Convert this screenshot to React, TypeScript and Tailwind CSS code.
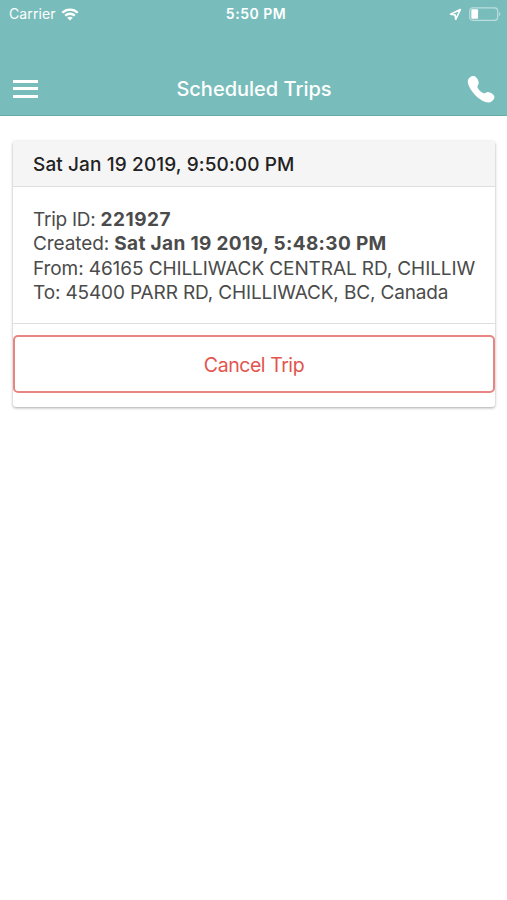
type Trip = {
  id: string;
  scheduled: string;
  created: string;
  from: string;
  to: string;
};

const trips: Trip[] = [
  {
    id: "221927",
    scheduled: "Sat Jan 19 2019, 9:50:00 PM",
    created: "Sat Jan 19 2019, 5:48:30 PM",
    from: "46165 CHILLIWACK CENTRAL RD, CHILLIW",
    to: "45400 PARR RD, CHILLIWACK, BC, Canada",
  },
];

function StatusBar() {
  return (
    <div className="grid h-7 grid-cols-3 items-center pl-[9px] pr-1.5">
      <div className="flex items-center gap-[5px]">
        <span className="text-[14px] leading-5 tracking-[0.1px]">Carrier</span>
        <svg width="18" height="13" viewBox="0 0 18 13" fill="none" aria-hidden>
          <path d="M1.3 4.7C5.6.5 12.4.5 16.7 4.7" stroke="currentColor" strokeWidth="2.3" />
          <path d="M4.2 7.6c2.7-2.5 6.9-2.5 9.6 0" stroke="currentColor" strokeWidth="2.3" />
          <path d="M9 12.6 6.2 9.8c1.6-1.5 4-1.5 5.6 0L9 12.6Z" fill="currentColor" />
        </svg>
      </div>
      <span className="pl-0.5 text-center text-[14px] font-semibold leading-5 tracking-[0.5px]">5:50 PM</span>
      <div className="flex items-center justify-end gap-[7px]">
        <svg width="13" height="13" viewBox="0 0 13 13" fill="none" aria-hidden>
          <path
            d="M1.5 6.2 11.4 1.5 6.7 11.4 6.1 6.9 1.5 6.2Z"
            stroke="currentColor"
            strokeWidth="1.6"
            strokeLinejoin="round"
          />
        </svg>
        <svg width="32" height="15" viewBox="0 0 32 15" fill="none" aria-hidden>
          <rect x=".7" y=".8" width="28" height="12.5" rx="3" stroke="currentColor" strokeOpacity=".5" strokeWidth="1.2" />
          <rect x="2.3" y="2.3" width="6.8" height="9.4" rx="1" fill="currentColor" />
          <path d="M30 5.2c1.8.7 1.8 3.2 0 3.9V5.2Z" fill="currentColor" fillOpacity=".5" />
        </svg>
      </div>
    </div>
  );
}

function Header() {
  return (
    <header className="flex h-[116px] flex-col justify-between border-b border-[#69a9a8] bg-[#78bdbc] text-white">
      <StatusBar />
      <div className="grid h-[53px] grid-cols-[60px_1fr_60px] items-center">
        <button aria-label="Menu" className="flex flex-col gap-[4.5px] pl-[13px]">
          <span className="h-[3px] w-[25px] bg-white" />
          <span className="h-[3px] w-[25px] bg-white" />
          <span className="h-[3px] w-[25px] bg-white" />
        </button>
        <h1 className="pl-px text-center text-[20px] font-medium leading-7">Scheduled Trips</h1>
        <button aria-label="Call" className="flex justify-end pr-3">
          <svg width="28" height="28" viewBox="0 0 28 28" fill="currentColor" aria-hidden>
            <path d="M1 5C1.8 2 5.2.2 7.7 1.2c2.2 1 4.2 4.8 4 7-.2 1.8-1.6 2.5-1.3 3.9.5 2 3.9 5.6 6.2 6.2 1.5.3 2.5-1.3 4.3-1.3 2.2.1 5.4 2.1 6.3 3.9 1 2.5-1.7 5.7-4.4 6.4-3.9 1-9.9-2.5-14.2-6.8C4.5 16.3-.2 9.5 1 5Z" />
          </svg>
        </button>
      </div>
    </header>
  );
}

function TripCard({ trip }: { trip: Trip }) {
  return (
    <article className="h-[266px] rounded-[3px] bg-white shadow-[0_1px_3px_rgba(0,0,0,0.35)]">
      <h2 className="h-[46px] rounded-t-[3px] border-b border-[#dedede] bg-[#f5f5f5] pl-5 text-[19px] font-[450] leading-[47px] tracking-[0.12px] text-[#222]">
        {trip.scheduled}
      </h2>
      <div className="h-[137px] overflow-hidden whitespace-nowrap border-b border-[#dedede] pl-5 pt-[21px] text-[19px] leading-[24.3px] tracking-[-0.1px] text-[#4b4b4b]">
        <p>
          <span className="tracking-[-0.25px]">Trip ID: </span>
          <b className="font-bold tracking-[0.5px]">{trip.id}</b>
        </p>
        <p>
          Created: <b className="font-bold tracking-[0.34px]">{trip.created}</b>
        </p>
        <p>From: {trip.from}</p>
        <p className="tracking-[-0.14px]">To: {trip.to}</p>
      </div>
      <button className="mt-[11px] h-[58px] w-full rounded-[5px] border-2 border-[#e88583] pt-0.5 text-[19.5px] leading-6 tracking-[-0.45px] text-[#e3544e]">
        Cancel Trip
      </button>
    </article>
  );
}

export default function App() {
  return (
    <div className="min-h-screen bg-white font-['Inter',sans-serif]">
      <Header />
      <main className="pl-[13px] pr-3 pt-[25px]">
        {trips.map((trip) => (
          <TripCard key={trip.id} trip={trip} />
        ))}
      </main>
    </div>
  );
}
